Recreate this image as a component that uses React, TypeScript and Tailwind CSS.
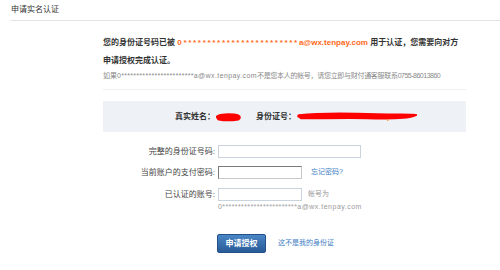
const font = { fontFamily: '"Liberation Sans", "Noto Sans CJK SC", sans-serif' }

const Stars = ({ className }: { className: string }) => (
  <span className={className}>{'0************************'}</span>
)

const App = () => {
  return (
    <div className="w-[500px] h-[270px] bg-white text-[#333] overflow-hidden" style={font}>
      {/* page title */}
      <div className="ml-[11px] h-[21px] flex items-center border-b border-[#e3e3e3] text-[8px] text-[#333]">
        申请实名认证
      </div>

      <div className="ml-[103px] w-[363px]">
        {/* notice */}
        <div className="mt-[13px] text-[8px] font-bold leading-[18px] whitespace-nowrap">
          您的身份证号码已被{' '}
          <span className="text-[#ff6a1a]">
            <Stars className="tracking-[1.7px]" />
            a@wx.tenpay.com
          </span>{' '}
          用于认证，您需要向对方
          <br />
          申请授权完成认证。
        </div>
        <div className="text-[7px] leading-[12px] text-[#8a8a8a] whitespace-nowrap pb-[7px] border-b border-[#f0f0f0]">
          如果<Stars className="tracking-[0.3px]" />
          <span className="tracking-[0.4px]">a@wx.tenpay.com</span>
          <span className="tracking-[-0.3px]">不是您本人的帐号，请您立即与财付通客服联系</span>
          <span className="tracking-[-0.5px]">0755-86013860</span>
        </div>

        {/* identity box */}
        <div className="mt-[11px] h-[31px] bg-[#eef2f7] flex items-center text-[8px] font-bold">
          <div className="w-[112px] text-right">真实姓名：</div>
          <svg width="26" height="10" viewBox="0 0 26 10" className="ml-[1px]">
            <path d="M2 5 C6 3 12 3 18 3.5 C22 4 24 5 22 6.5 C16 7.5 8 7.5 3 6.5" stroke="#ff0000" strokeWidth="4" fill="none" strokeLinecap="round" />
          </svg>
          <div className="ml-[14px]">身份证号：</div>
          <svg width="120" height="12" viewBox="0 0 120 12" className="ml-[1px]">
            <path d="M2 5 C20 3 50 3 80 4 C100 4.5 112 4 116 4.5 C110 7 90 7 70 6.5 C40 6 15 7 4 6.5" stroke="#ff0000" strokeWidth="3.5" fill="none" strokeLinecap="round" />
            <path d="M90 8 L91 10" stroke="#ff8000" strokeWidth="1" />
          </svg>
        </div>

        {/* form */}
        <div className="mt-[13px] flex items-center text-[8px] text-[#444]">
          <div className="w-[112px] text-right">完整的身份证号码:</div>
          <input className="ml-[3px] w-[143px] h-[13px] border border-[#c9d3de] bg-white outline-none" />
        </div>
        <div className="mt-[8px] flex items-center text-[8px] text-[#444]">
          <div className="w-[112px] text-right">当前账户的支付密码:</div>
          <input
            type="password"
            className="ml-[3px] w-[84px] h-[13px] border border-t-[#7a7a7a] border-l-[#7a7a7a] border-r-[#c8c8c8] border-b-[#c8c8c8] bg-white outline-none"
          />
          <a className="ml-[9px] text-[7px] text-[#3b7cc4]">忘记密码?</a>
        </div>
        <div className="mt-[9px] flex items-center text-[8px] text-[#444]">
          <div className="w-[112px] text-right">已认证的账号:</div>
          <input className="ml-[3px] w-[84px] h-[13px] border border-[#c9d3de] bg-white outline-none" />
          <span className="ml-[6px] text-[7px] text-[#999]">帐号为</span>
        </div>
        <div className="ml-[115px] text-[7px] leading-[12px] text-[#9a9a9a] whitespace-nowrap">
          <Stars className="tracking-[0.4px]" />
          <span className="tracking-[0.5px]">a@wx.tenpay.com</span>
        </div>

        {/* actions */}
        <div className="mt-[21px] ml-[114px] flex items-center">
          <button className="w-[49px] h-[19px] rounded-[2px] border border-[#24518a] bg-gradient-to-b from-[#4a86c6] to-[#285b97] text-white text-[8px] font-bold">
            申请授权
          </button>
          <a className="ml-[12px] text-[7px] text-[#3b7cc4]">这不是我的身份证</a>
        </div>
      </div>
    </div>
  )
}

export default App
